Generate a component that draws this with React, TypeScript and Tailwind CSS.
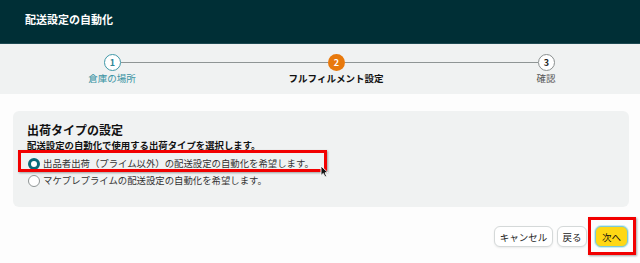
import React from "react";

const font = { fontFamily: '"Noto Sans CJK JP", "Noto Sans", sans-serif' };

export default function App() {
  return (
    <div className="w-[640px] h-[263px] bg-[#fdfdfd] overflow-hidden relative" style={font}>
      {/* header */}
      <div className="h-[44px] bg-[#002f36] border-b border-[#1d4a52] px-[25px] pt-[11px]">
        <div className="text-[11px] leading-[16px] font-bold text-white">配送設定の自動化</div>
      </div>

      {/* stepper */}
      <div className="h-[50px] bg-[#f0f2f2] pt-[10px]">
        <div className="flex items-center pl-[104px]">
          <div className="w-[17px] h-[17px] rounded-full bg-white border-[1.5px] border-[#3f98a8] flex items-center justify-center text-[9px] font-bold text-[#2f8797] leading-none">1</div>
          <div className="w-[207px] h-[1.5px] bg-[#8f9595]" />
          <div className="w-[17px] h-[17px] rounded-full bg-[#e8790c] flex items-center justify-center text-[9px] font-bold text-white leading-none">2</div>
          <div className="w-[193px] h-[1.5px] bg-[#8f9595]" />
          <div className="w-[17px] h-[17px] rounded-full bg-white border-[1.5px] border-[#8a8f8f] flex items-center justify-center text-[9px] font-bold text-[#222] leading-none">3</div>
        </div>
        <div className="flex pl-[52px] mt-[1px] text-[9.5px] leading-[12px]">
          <div className="w-[120px] text-center text-[#3a93a3]">倉庫の場所</div>
          <div className="w-[104px]" />
          <div className="w-[120px] text-center font-bold text-[#111]">フルフィルメント設定</div>
          <div className="w-[90px]" />
          <div className="w-[120px] text-center text-[#555]">確認</div>
        </div>
      </div>

      {/* card */}
      <div className="mt-[17px] ml-[13px] mr-[11px] h-[96px] bg-[#f0f2f2] rounded-[6px] pt-[11px] pl-[14px] relative">
        <div className="text-[12px] leading-[16px] font-bold text-[#111]">出荷タイプの設定</div>
        <div className="text-[9.4px] leading-[13px] font-bold text-[#111] mt-[1px]">配送設定の自動化で使用する出荷タイプを選択します。</div>
        <div className="mt-[5px] pl-[1px] flex flex-col gap-[4px]">
          <div className="flex items-center gap-[3px] h-[13px]">
            <div className="w-[12px] h-[12px] rounded-full bg-white border-[3.5px] border-[#0b6a79]" />
            <div className="text-[9.4px] leading-[13px] text-[#333]">出品者出荷（プライム以外）の配送設定の自動化を希望します。</div>
          </div>
          <div className="flex items-center gap-[3px] h-[13px]">
            <div className="w-[12px] h-[12px] rounded-full bg-white border border-[#8f9595]" />
            <div className="text-[9.4px] leading-[13px] text-[#333]">マケプレプライムの配送設定の自動化を希望します。</div>
          </div>
        </div>
        {/* annotation box */}
        <div className="absolute left-[5px] top-[39px] w-[309px] h-[22px] border-[3.5px] border-[#f20000] shadow-[1px_1px_2px_rgba(0,0,0,0.35)]" />
        {/* cursor */}
        <svg className="absolute left-[307px] top-[54px]" width="9" height="13" viewBox="0 0 9 13">
          <path d="M1 1 L1 10.5 L3.3 8.4 L5 12 L6.6 11.2 L5 7.8 L8 7.6 Z" fill="#111" stroke="#fff" strokeWidth="0.9" strokeLinejoin="round" />
        </svg>
      </div>

      {/* buttons */}
      <div className="flex justify-end items-center mt-[19px] pr-[12px] text-[9.5px] leading-[12px]">
        <div className="w-[59px] h-[21px] rounded-[6px] bg-white border border-[#d5d9d9] shadow-[0_1px_2px_rgba(0,0,0,0.08)] flex items-center justify-center text-[#222]">キャンセル</div>
        <div className="w-[4px]" />
        <div className="w-[30px] h-[21px] rounded-[6px] bg-white border border-[#d5d9d9] shadow-[0_1px_2px_rgba(0,0,0,0.08)] flex items-center justify-center text-[#222]">戻る</div>
        <div className="w-[8px]" />
        <div className="relative">
          <div className="w-[33px] h-[21px] rounded-[6px] bg-[#ffd814] border-[1.5px] border-[#7fc9d4] shadow-[0_0_0_1px_#c9eef2] flex items-center justify-center text-[#111]">次へ</div>
          <div className="absolute left-[-7px] right-[-8px] top-[-9px] bottom-[-8px] border-[3.5px] border-[#f20000] shadow-[1px_1px_2px_rgba(0,0,0,0.35)]" />
        </div>
      </div>
    </div>
  );
}
